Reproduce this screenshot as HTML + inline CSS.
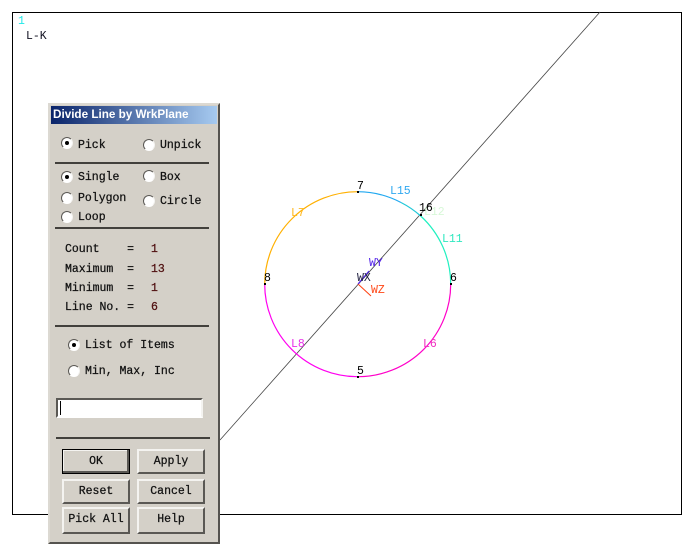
<!DOCTYPE html>
<html><head><meta charset="utf-8"><style>
html,body{margin:0;padding:0;background:#fff}
#r{position:relative;width:697px;height:545px;overflow:hidden;background:#fff;font-family:"Liberation Mono",monospace;font-size:11.5px;color:#111;-webkit-text-stroke:.25px currentColor}
svg{position:absolute;left:0;top:0}
svg text{font-family:"Liberation Mono",monospace;font-size:11.5px}
#d{position:absolute;left:48px;top:103px;width:172px;height:441px;box-sizing:border-box;background:#d4d0c8;border:2px solid;border-color:#dcd9d2 #55534f #55534f #dcd9d2}
#r .a{position:absolute;white-space:pre;line-height:13px}
.t{position:absolute;left:51px;top:106px;width:166px;height:18px;background:linear-gradient(90deg,#0a246a,#a6caf0);color:#fff;font:bold 11.7px/18px "Liberation Sans",sans-serif;padding-left:2px;box-sizing:border-box;white-space:pre;-webkit-text-stroke:0}
.s{position:absolute;left:55px;width:154px;height:2px;background:#42403c}
.o{position:absolute;width:12px;height:12px;box-sizing:border-box;border-radius:50%;background:#fff;border:1.5px solid;border-color:#5a5854 #f4f3f0 #fff #5a5854}
.o.c::after{content:"";position:absolute;left:2.5px;top:2.5px;width:4px;height:4px;border-radius:50%;background:#000}
.b{position:absolute;width:68px;height:25px;box-sizing:border-box;background:#d4d0c8;border:2px solid;border-color:#f4f3f0 #5a5854 #5a5854 #f4f3f0;text-align:center;line-height:22px;white-space:pre}
.b.k{border:1px solid #000;box-shadow:inset -2px -2px 0 #5a5854,inset 1px 1px 0 #f4f3f0;line-height:24px}
</style></head><body><div id="r">
<svg width="697" height="545" viewBox="0 0 697 545" fill="none">
<rect x="12.5" y="12.5" width="669" height="502" stroke="#000" stroke-width="1"/>
<line x1="600" y1="12" x2="220" y2="440" stroke="#444" stroke-width="0.8"/>
<path d="M264.7 284A93 92.5 0 0 1 358 191.7" stroke="#ffb000" stroke-width="1.2"/>
<path d="M358 191.7A93 92.5 0 0 1 401 202.5" stroke="#20a8f0" stroke-width="1.2"/>
<path d="M401 202.5A93 92.5 0 0 1 420.7 216" stroke="#20c8d8" stroke-width="1.2"/>
<path d="M420.7 216A93 92.5 0 0 1 450.7 284" stroke="#20f0c0" stroke-width="1.2"/>
<path d="M450.7 284A93 92.5 0 0 1 358 376.7" stroke="#ff00c8" stroke-width="1.2"/>
<path d="M358 376.7A93 92.5 0 0 1 264.7 284" stroke="#ff00f0" stroke-width="1.2"/>
<rect x="357" y="191" width="2" height="2" fill="#000"/>
<rect x="357" y="376" width="2" height="2" fill="#000"/>
<rect x="264" y="283" width="2" height="2" fill="#000"/>
<rect x="450" y="283" width="2" height="2" fill="#000"/>
<rect x="420" y="214" width="2" height="2" fill="#000"/>
<line x1="358" y1="284" x2="371" y2="296" stroke="#ff4010"/>
<line x1="358" y1="284" x2="369" y2="271" stroke="#5020f0"/>
<text x="18" y="24" fill="#20e8e8">1</text>
<text x="26" y="39" fill="#101020">L-K</text>
<text x="357" y="189" fill="#000">7</text>
<text x="357" y="374" fill="#000">5</text>
<text x="264" y="281" fill="#000">8</text>
<text x="450" y="281" fill="#000">6</text>
<text x="424" y="215" fill="#d8f8d8">L12</text>
<text x="419" y="211" fill="#000">16</text>
<text x="390" y="194" fill="#30a8f0">L15</text>
<text x="442" y="242" fill="#30e8c0">L11</text>
<text x="291" y="216" fill="#ffb820">L7</text>
<text x="291" y="347" fill="#e830e8">L8</text>
<text x="423" y="347" fill="#f030c0">L6</text>
<text x="369" y="266" fill="#5020e8">WY</text>
<text x="371" y="293" fill="#ff4818">WZ</text>
<text x="357" y="281" fill="#202040">WX</text>
</svg>
<div id="d"></div>
<div class="t">Divide Line by WrkPlane</div>

<div class="o c" style="left:61px;top:137px"></div><div class="a" style="left:78px;top:139px">Pick</div>
<div class="o" style="left:143px;top:139px"></div><div class="a" style="left:160px;top:139px">Unpick</div>
<div class="s" style="top:162px"></div>
<div class="o c" style="left:61px;top:171px"></div><div class="a" style="left:78px;top:171px">Single</div>
<div class="o" style="left:143px;top:170px"></div><div class="a" style="left:160px;top:171px">Box</div>
<div class="o" style="left:61px;top:192px"></div><div class="a" style="left:78px;top:192px">Polygon</div>
<div class="o" style="left:143px;top:195px"></div><div class="a" style="left:160px;top:195px">Circle</div>
<div class="o" style="left:61px;top:211px"></div><div class="a" style="left:78px;top:211px">Loop</div>
<div class="s" style="top:227px"></div>

<div class="a" style="left:65px;top:243px">Count    =</div><div class="a" style="left:151px;top:243px;color:#501010">1</div>
<div class="a" style="left:65px;top:263px">Maximum  =</div><div class="a" style="left:151px;top:263px;color:#501010">13</div>
<div class="a" style="left:65px;top:282px">Minimum  =</div><div class="a" style="left:151px;top:282px;color:#501010">1</div>
<div class="a" style="left:65px;top:301px">Line No. =</div><div class="a" style="left:151px;top:301px;color:#501010">6</div>
<div class="s" style="top:325px"></div>

<div class="o c" style="left:68px;top:339px"></div><div class="a" style="left:85px;top:339px">List of Items</div>
<div class="o" style="left:68px;top:365px"></div><div class="a" style="left:85px;top:365px">Min, Max, Inc</div>

<div style="position:absolute;left:56px;top:398px;width:147px;height:20px;box-sizing:border-box;background:#fff;border:2px solid;border-color:#5a5854 #f4f3f0 #fff #5a5854"></div>
<div style="position:absolute;left:60px;top:401px;width:1px;height:14px;background:#000"></div>
<div class="s" style="top:437px;left:56px"></div>

<div class="b k" style="left:62px;top:449px">OK</div>
<div class="b" style="left:137px;top:449px">Apply</div>
<div class="b" style="left:62px;top:479px">Reset</div>
<div class="b" style="left:137px;top:479px">Cancel</div>
<div class="b" style="left:62px;top:507px;height:27px">Pick All</div>
<div class="b" style="left:137px;top:507px;height:27px">Help</div>
</div></body></html>
